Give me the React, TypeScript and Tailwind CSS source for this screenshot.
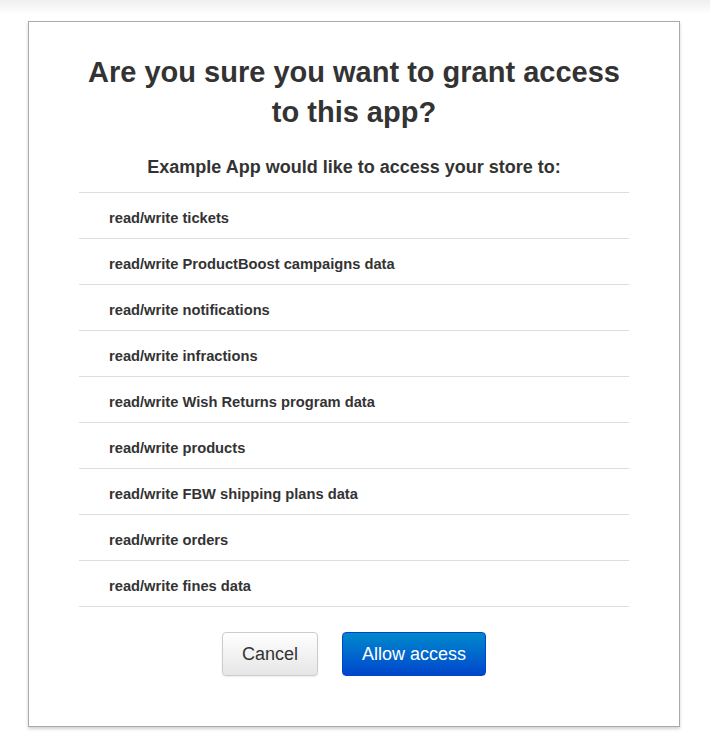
import React from "react";

const perms = [
  "read/write tickets",
  "read/write ProductBoost campaigns data",
  "read/write notifications",
  "read/write infractions",
  "read/write Wish Returns program data",
  "read/write products",
  "read/write FBW shipping plans data",
  "read/write orders",
  "read/write fines data",
];

export default function App() {
  return (
    <div
      className="w-[710px] min-h-[756px] bg-white relative"
      style={{ fontFamily: '"Liberation Sans", Arial, sans-serif' }}
    >
      <div className="absolute top-0 left-0 right-0 h-[14px] bg-gradient-to-b from-[#efefef] to-white" />
      <div className="relative pt-[21px] pl-[28px] flex">
        <div className="w-[652px] h-[706px] border border-[#aaaaaa] bg-white shadow-[0_2px_3px_rgba(0,0,0,0.18)] flex flex-col items-center pt-[30px]">
          <h1 className="text-[29px] leading-[40px] font-bold text-[#333333] text-center w-[560px]">
            Are you sure you want to grant access to this app?
          </h1>
          <p className="mt-[24px] text-[18px] leading-[22px] font-bold text-[#333333] text-center">
            Example App would like to access your store to:
          </p>
          <ul className="mt-[14px] w-[550px] border-t border-[#dddddd]">
            {perms.map((p) => (
              <li
                key={p}
                className="h-[46px] border-b border-[#dddddd] pl-[30px] pt-[5px] flex items-center text-[14.7px] font-bold text-[#333333]"
              >
                {p}
              </li>
            ))}
          </ul>
          <div className="mt-[25px] flex gap-[24px]">
            <button className="w-[96px] h-[44px] rounded-[4px] border border-[#cccccc] bg-gradient-to-b from-white to-[#e6e6e6] text-[18px] text-[#333333] shadow-[0_1px_2px_rgba(0,0,0,0.08)]">
              Cancel
            </button>
            <button className="w-[144px] h-[44px] rounded-[4px] border border-[#0044cc] bg-gradient-to-b from-[#0088cc] to-[#0044cc] text-[18px] text-white">
              Allow access
            </button>
          </div>
        </div>
      </div>
    </div>
  );
}
